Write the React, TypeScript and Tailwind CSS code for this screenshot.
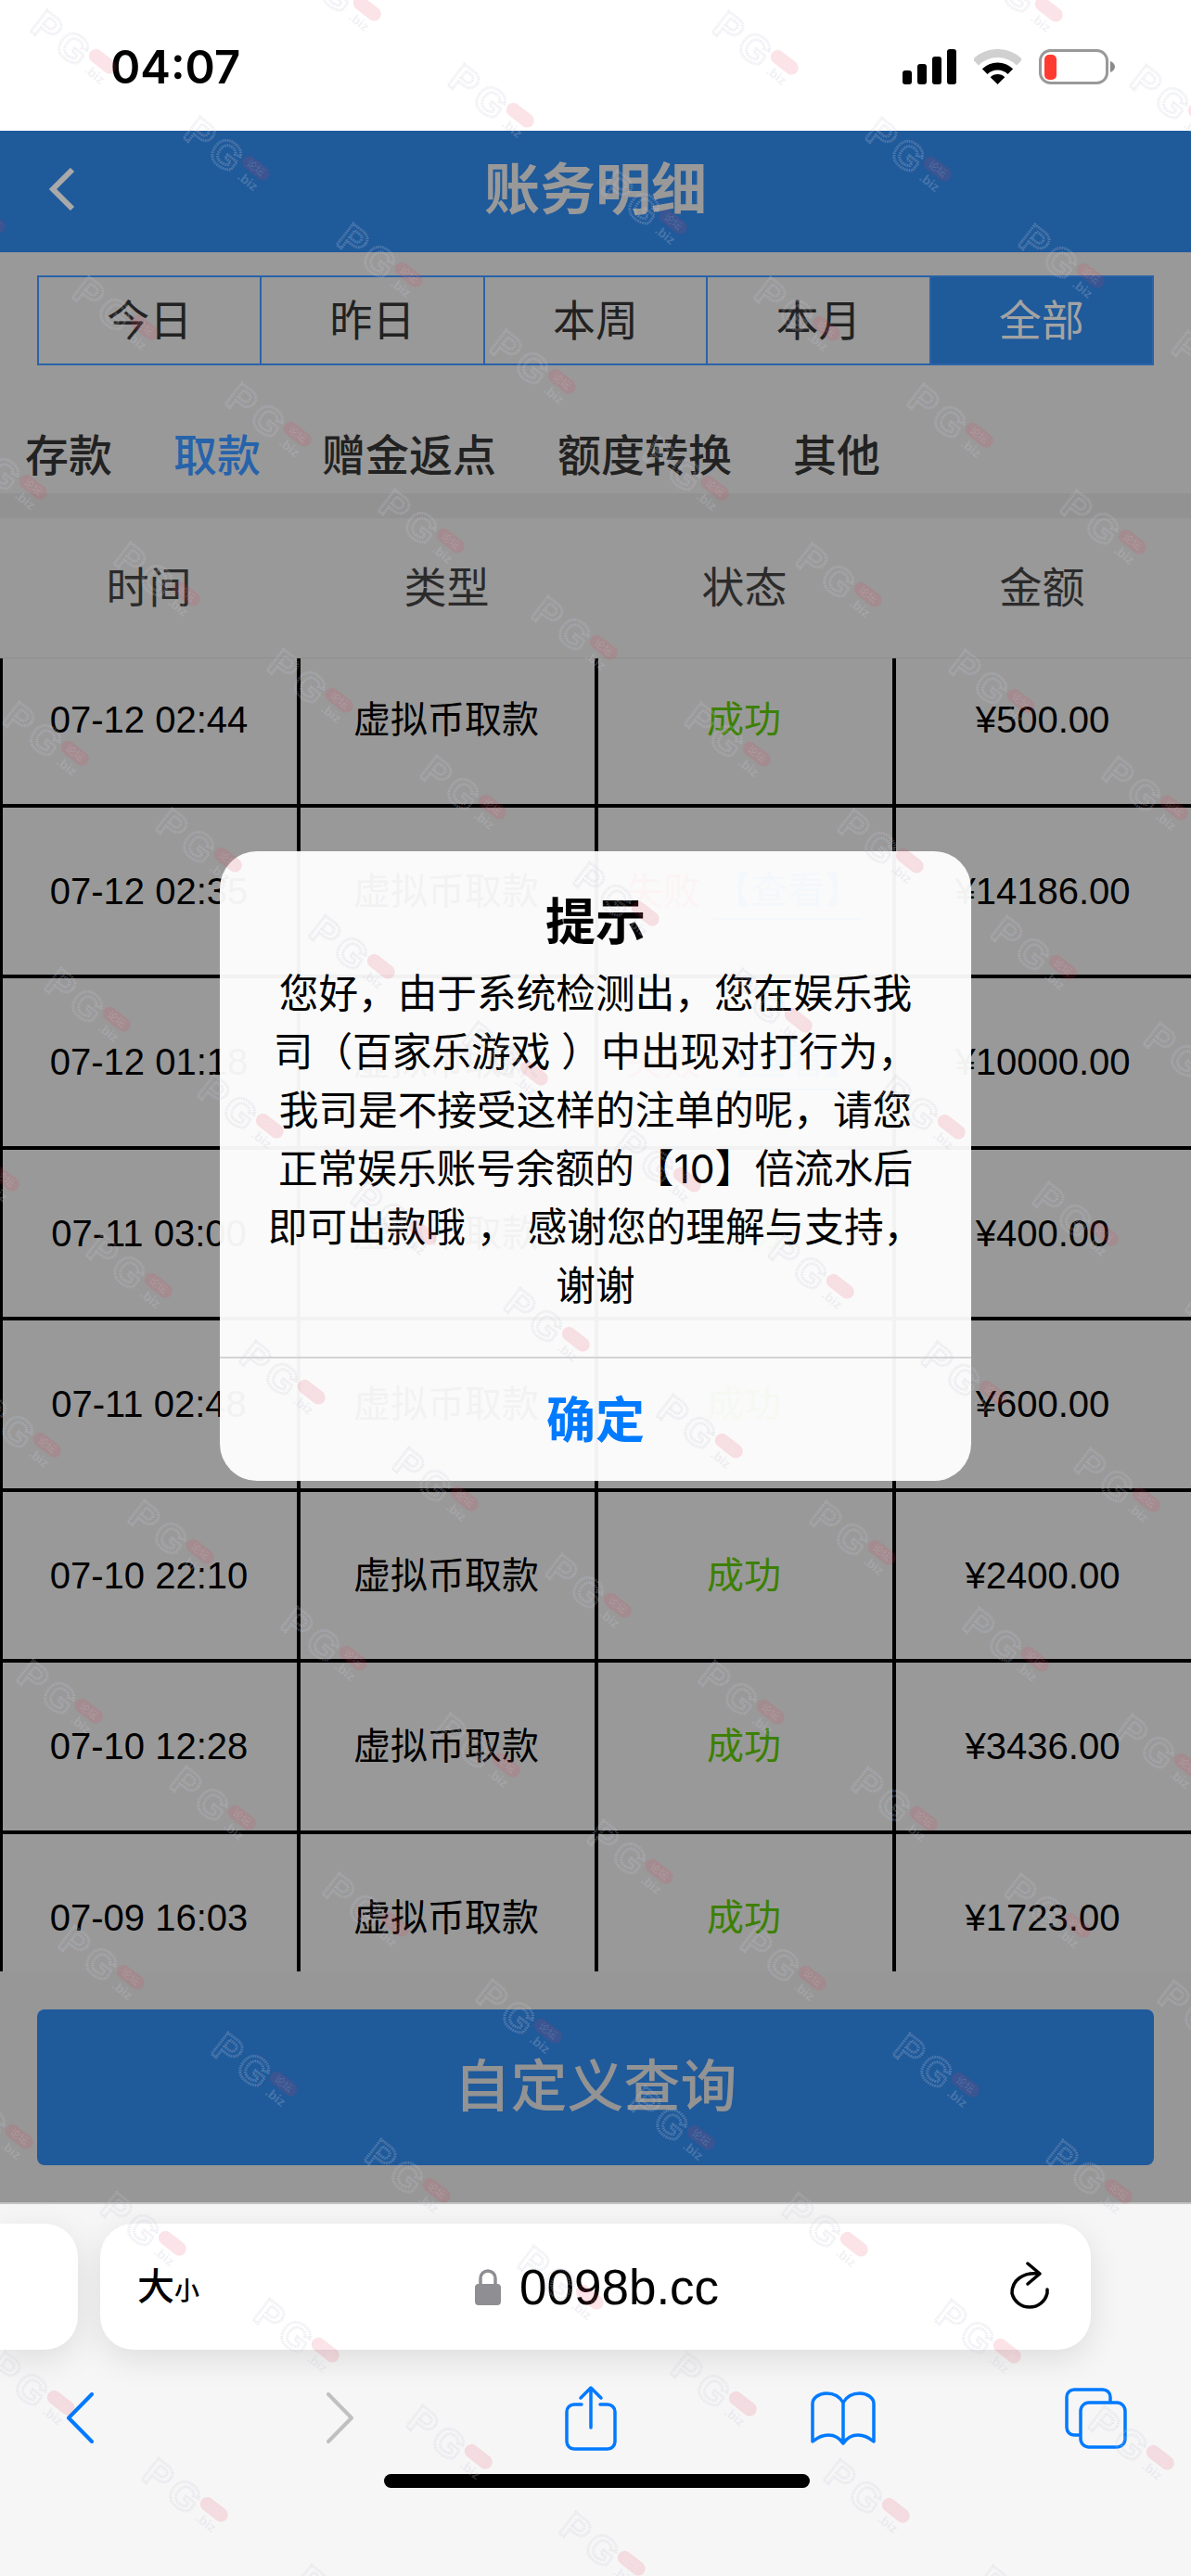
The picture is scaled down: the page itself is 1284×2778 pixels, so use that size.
const PERIODS = [
  { label: '今日' },
  { label: '昨日' },
  { label: '本周' },
  { label: '本月' },
  { label: '全部', active: true },
];

const CATEGORIES = [
  { label: '存款' },
  { label: '取款', active: true },
  { label: '赠金返点' },
  { label: '额度转换' },
  { label: '其他' },
];

const COLUMNS = ['时间', '类型', '状态', '金额'];

const ROWS = [
  { time: '07-12 02:44', ok: true, amount: '¥500.00' },
  { time: '07-12 02:35', ok: false, amount: '¥14186.00' },
  { time: '07-12 01:18', ok: false, amount: '¥10000.00' },
  { time: '07-11 03:00', ok: true, amount: '¥400.00' },
  { time: '07-11 02:48', ok: true, amount: '¥600.00' },
  { time: '07-10 22:10', ok: true, amount: '¥2400.00' },
  { time: '07-10 12:28', ok: true, amount: '¥3436.00' },
  { time: '07-09 16:03', ok: true, amount: '¥1723.00' },
];

const MESSAGE = [
  '您好，由于系统检测出，您在娱乐我',
  '司（百家乐游戏 ）中出现对打行为，',
  '我司是不接受这样的注单的呢，请您',
  '正常娱乐账号余额的【10】倍流水后',
  '即可出款哦 ， 感谢您的理解与支持，',
  '谢谢',
];

// the forum stamp repeats on a skewed lattice over the whole screenshot
const MARKS: { x: number; y: number }[] = [];
for (let i = -12; i < 24; i++) {
  for (let j = -8; j < 20; j++) {
    const x = 33 + i * 165 - j * 120;
    const y = 15 + i * 115 + j * 172;
    if (x > -130 && x < 1284 && y > -100 && y < 2778) MARKS.push({ x, y });
  }
}

function Stamp() {
  return (
    <svg className="overflow-visible" width="120" height="100" viewBox="0 0 120 100">
      <g transform="translate(18 14) rotate(38)">
        <text
          x="0"
          y="15"
          textAnchor="middle"
          fontFamily="Liberation Sans"
          fontWeight="700"
          fontSize="42"
          fill="none"
          stroke="#c8c8d6"
          strokeOpacity="0.3"
          strokeWidth="3"
          strokeDasharray="1.500 1"
        >
          P
        </text>
        <text
          x="36"
          y="15"
          textAnchor="middle"
          fontFamily="Liberation Sans"
          fontWeight="700"
          fontSize="42"
          fill="none"
          stroke="#c8c8d6"
          strokeOpacity="0.3"
          strokeWidth="3"
          strokeDasharray="1.500 1"
        >
          G
        </text>
        <rect x="53" y="-15" width="34" height="15" rx="7.500" fill="#e23c56" fillOpacity="0.14" />
        <text x="70" y="-3.500" textAnchor="middle" fontFamily="Noto Sans CJK SC" fontSize="11" fill="#fff" fillOpacity="0.15">
          论坛
        </text>
        <text x="72" y="14" textAnchor="middle" fontFamily="Liberation Sans" fontWeight="700" fontSize="14" fill="#c8c8d6" fillOpacity="0.25">
          .biz
        </text>
      </g>
    </svg>
  );
}

function StatusIcons() {
  return (
    <div className="flex items-center">
      <svg width="58" height="38" viewBox="0 0 58 38" fill="#000">
        <rect x="0" y="23" width="10" height="15" rx="3" />
        <rect x="16" y="16" width="10" height="22" rx="3" />
        <rect x="32" y="8" width="10" height="30" rx="3" />
        <rect x="48" y="0" width="10" height="38" rx="3" />
      </svg>
      <svg className="ml-[19px]" width="51" height="38" viewBox="0 0 51 38" fill="none">
        <path d="M1.8 14.3A33.5 33.5 0 0 1 49.2 14.3" stroke="#d0d0d0" strokeWidth="9" />
        <path d="M11.7 24.2A19.5 19.5 0 0 1 39.3 24.2" stroke="#000" strokeWidth="8" />
        <path d="M25.5 38L17.7 30.2A11 11 0 0 1 33.3 30.2Z" fill="#000" />
      </svg>
      <svg className="ml-[19px]" width="82" height="38" viewBox="0 0 82 38" fill="none">
        <rect x="1.5" y="1.5" width="72" height="35" rx="11" stroke="#999" strokeWidth="3" />
        <rect x="6" y="6" width="13" height="27" rx="5" fill="#ff3b30" />
        <path d="M77 13C80 14 82 16.500 82 19C82 21.500 80 24 77 25Z" fill="#8a8a8a" />
      </svg>
    </div>
  );
}

export default function App() {
  return (
    <div className="relative flex h-[2778px] w-[1284px] flex-col overflow-hidden bg-[#f6f6f6] font-[Inter,'Noto_Sans_CJK_SC',sans-serif] text-black">
      <div className="flex h-[141px] items-center justify-between bg-white pl-[119px] pr-[82px] pt-[3px]">
        <span className="text-[49px] font-semibold leading-none">04:07</span>
        <StatusIcons />
      </div>

      <div className="grid h-[131px] grid-cols-[1fr_auto_1fr] items-center bg-[#1f5a9b] px-[53px] pb-[6px]">
        <svg width="28" height="46" viewBox="0 0 28 46" fill="none" stroke="#a9a9a9" strokeWidth="6">
          <path d="M25 2L4 23L25 44" />
        </svg>
        <h1 className="text-[60px] font-semibold leading-none text-[#999]">账务明细</h1>
      </div>

      <div className="flex-1 bg-[#999]">
        <div className="mx-[40px] mt-[25px] flex h-[97px] border-2 border-[#2a63a8]">
          {PERIODS.map((p, idx) => (
            <div
              key={p.label}
              className={`flex flex-1 items-center justify-center text-[46px] ${idx > 0 ? 'border-l-2 border-[#2a63a8]' : ''} ${p.active ? 'bg-[#1f5a9b] text-[#a3a3a3]' : 'text-[#222]'}`}
            >
              {p.label}
            </div>
          ))}
        </div>

        <div className="flex h-[138px] items-center gap-[66px] pl-[27px] pt-[54px]">
          {CATEGORIES.map((c) => (
            <span key={c.label} className={`text-[47px] font-medium leading-none ${c.active ? 'text-[#2663ab]' : 'text-[#222]'}`}>
              {c.label}
            </span>
          ))}
        </div>

        <div className="h-[27px] bg-[#929292]" />

        <div className="grid h-[151px] grid-cols-4 items-center border-b border-[#8e8e8e] pb-[2px]">
          {COLUMNS.map((c) => (
            <span key={c} className="text-center text-[46px] text-[#2b2b2b]">
              {c}
            </span>
          ))}
        </div>

        <div className="h-[1416px] overflow-hidden">
          <div className="-mt-[24px] -ml-px w-[1285px] font-['Liberation_Sans','Noto_Sans_CJK_SC',sans-serif] text-[40px]">
            {ROWS.map((r) => (
              <div key={r.time} className="grid h-[184.5px] grid-cols-[321px_321px_321px_322px] border-b-4 border-black">
                <div className="flex items-center justify-center border-l-4 border-black pr-[2px]">{r.time}</div>
                <div className="flex items-center justify-center border-l-4 border-black pr-[3px]">虚拟币取款</div>
                <div className="flex items-center justify-center border-l-4 border-black pr-[3px]">
                  {r.ok ? (
                    <span className="text-[#3d8000]">成功</span>
                  ) : (
                    <>
                      <span className="text-[#b33]">失败</span>
                      <span className="ml-[14px] border-b-2 border-[#2663ab] text-[#2663ab]">【查看】</span>
                    </>
                  )}
                </div>
                <div className="flex items-center justify-center border-l-4 border-black pr-[2px]">{r.amount}</div>
              </div>
            ))}
          </div>
        </div>

        <div className="h-[249px] bg-[#979797] px-[40px] pt-[41px]">
          <button className="flex h-[168px] w-full items-center justify-center rounded-lg bg-[#1f5a9b] text-[61px] font-medium text-[#939393]">
            自定义查询
          </button>
        </div>
      </div>

      <div className="h-[403px] shrink-0 border-t-2 border-[#c4c4c4] bg-[#f6f6f6]">
        <div className="mt-[21px] flex h-[136px] gap-[24px]">
          <div className="w-[84px] rounded-r-[36px] bg-white shadow-[0_10px_36px_rgba(0,0,0,0.1)]" />
          <div className="flex w-[1068px] items-center rounded-[36px] bg-white pl-[40px] pr-[45px] shadow-[0_10px_36px_rgba(0,0,0,0.1)]">
            <span className="text-[40px] font-medium leading-none">大</span>
            <span className="mt-[8px] text-[27px] font-medium leading-none">小</span>
            <svg className="ml-[297px]" width="28" height="39" viewBox="0 0 28 39" fill="none">
              <path d="M6 18V10a8 8 0 0 1 16 0V18" stroke="#8e8e93" strokeWidth="3.500" />
              <rect x="0" y="16" width="28" height="23" rx="4" fill="#8e8e93" />
            </svg>
            <span className="ml-[20px] font-['Liberation_Sans',sans-serif] text-[53px] leading-none">0098b.cc</span>
            <svg className="ml-auto" width="42" height="55" viewBox="0 0 42 55" fill="none" stroke="#000" strokeWidth="3.500" strokeLinecap="round" strokeLinejoin="round">
              <path d="M19 2L32 13L19 24" />
              <path d="M31 13C14 11 2 20 2 34A19.500 19.500 0 0 0 40 34V30" />
            </svg>
          </div>
        </div>

        <div className="mt-[38px] flex h-[71px] items-center pl-[71px]">
          <svg width="30" height="55" viewBox="0 0 30 55" fill="none" stroke="#007aff" strokeWidth="4" strokeLinecap="round" strokeLinejoin="round">
            <path d="M28 2L3 27.500L28 53" />
          </svg>
          <svg className="ml-[251px]" width="30" height="55" viewBox="0 0 30 55" fill="none" stroke="#c0c0c0" strokeWidth="4" strokeLinecap="round" strokeLinejoin="round">
            <path d="M2 2L27 27.500L2 53" />
          </svg>
          <svg className="ml-[227px]" width="56" height="71" viewBox="0 0 56 71" fill="none" stroke="#007aff" strokeWidth="3.500" strokeLinecap="round" strokeLinejoin="round">
            <path d="M18 21H10a8 8 0 0 0-8 8V61a8 8 0 0 0 8 8H46a8 8 0 0 0 8-8V29a8 8 0 0 0-8-8H38" />
            <path d="M28 3V46M17 14L28 3L39 14" />
          </svg>
          <svg className="ml-[209px]" width="70" height="58" viewBox="0 0 70 58" fill="none" stroke="#007aff" strokeWidth="3.500" strokeLinecap="round" strokeLinejoin="round">
            <path d="M35 12C31 5 24 2 17 2C9 2 2 7 2 13V54C8 49 14 47 19 47C26 47 31 50 35 56C39 50 44 47 51 47C56 47 62 49 68 54V13C68 7 61 2 53 2C46 2 39 5 35 12ZM35 12V56" />
          </svg>
          <svg className="ml-[204px]" width="67" height="66" viewBox="0 0 67 66" fill="none" stroke="#007aff" strokeWidth="3.500" strokeLinecap="round" strokeLinejoin="round">
            <path d="M15 51H10a8 8 0 0 1-8-8V10a8 8 0 0 1 8-8H41a8 8 0 0 1 8 8V14" />
            <rect x="17" y="16" width="48" height="48" rx="9" />
          </svg>
        </div>

        <div className="ml-[414px] mt-[25px] h-[15px] w-[459px] rounded-full bg-black" />
      </div>

      <div className="absolute left-[237px] top-[918px] flex h-[679px] w-[810px] flex-col rounded-[40px] bg-white/95">
        <h2 className="pt-[32px] text-center text-[54px] font-semibold leading-[90px]">提示</h2>
        <div className="flex-1 text-center text-[42.67px] leading-[63px]">
          {MESSAGE.map((line) => (
            <p key={line} className="whitespace-pre">
              {line}
            </p>
          ))}
        </div>
        <button className="h-[134px] border-t-2 border-[#d4d4d4] pt-[4px] text-[53px] font-semibold text-[#007aff]">确定</button>
      </div>

      <div className="pointer-events-none absolute inset-0">
        {MARKS.map((m) => (
          <div key={`${m.x}-${m.y}`} className="absolute" style={{ left: m.x, top: m.y }}>
            <Stamp />
          </div>
        ))}
      </div>
    </div>
  );
}
